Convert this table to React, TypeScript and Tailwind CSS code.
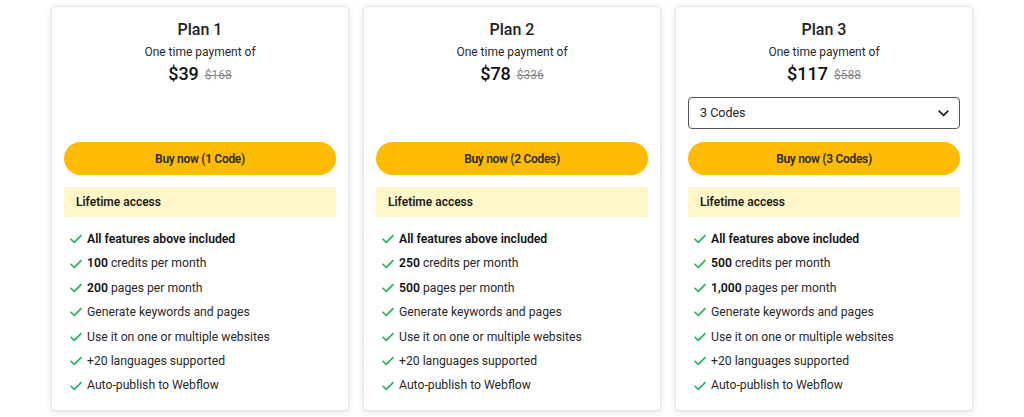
import React from "react";

type Feature = { bold?: string; text: string; allBold?: boolean };
type Plan = {
  name: string;
  price: string;
  old: string;
  button: string;
  select?: string;
  features: Feature[];
};

const common: Feature[] = [
  { text: "Generate keywords and pages" },
  { text: "Use it on one or multiple websites" },
  { text: "+20 languages supported" },
  { text: "Auto-publish to Webflow" },
];

const plans: Plan[] = [
  {
    name: "Plan 1",
    price: "$39",
    old: "$168",
    button: "Buy now (1 Code)",
    features: [
      { text: "All features above included", allBold: true },
      { bold: "100", text: " credits per month" },
      { bold: "200", text: " pages per month" },
      ...common,
    ],
  },
  {
    name: "Plan 2",
    price: "$78",
    old: "$336",
    button: "Buy now (2 Codes)",
    features: [
      { text: "All features above included", allBold: true },
      { bold: "250", text: " credits per month" },
      { bold: "500", text: " pages per month" },
      ...common,
    ],
  },
  {
    name: "Plan 3",
    price: "$117",
    old: "$588",
    button: "Buy now (3 Codes)",
    select: "3 Codes",
    features: [
      { text: "All features above included", allBold: true },
      { bold: "500", text: " credits per month" },
      { bold: "1,000", text: " pages per month" },
      ...common,
    ],
  },
];

function Check() {
  return (
    <svg width="12" height="10" viewBox="0 0 12 10" fill="none" className="shrink-0">
      <path d="M1 5.2 L4.3 8.4 L11 1.6" stroke="#22b35e" strokeWidth="1.6" strokeLinecap="round" strokeLinejoin="round" />
    </svg>
  );
}

function Card({ plan }: { plan: Plan }) {
  return (
    <div className="w-[298px] bg-white border border-[#e6e6e6] shadow-[0_1px_6px_rgba(0,0,0,0.12)] rounded-[3px] px-3 pt-[13px] pb-[12px] flex flex-col">
      <div className="text-center text-[16px] leading-[20px] font-medium text-[#222]">{plan.name}</div>
      <div className="text-center text-[12px] leading-[18px] mt-[3px] text-[#2a2a2a]">One time payment of</div>
      <div className="h-[24px] flex items-center justify-center gap-[6px] mt-[1px] overflow-hidden">
        <span className="text-[18px] leading-[24px] font-medium text-[#111]">{plan.price}</span>
        <span className="text-[12px] leading-[24px] pt-[1px] text-[#888] line-through">{plan.old}</span>
      </div>
      <div className="mt-[11px] h-[32px]">
        {plan.select && (
          <div className="h-[32px] border border-[#555] rounded-[4px] flex items-center justify-between pl-[11px] pr-[10px] text-[12.5px] text-[#222]">
            <span>{plan.select}</span>
            <svg width="11" height="7" viewBox="0 0 11 7" fill="none">
              <path d="M1.2 1.2 L5.5 5.4 L9.8 1.2" stroke="#222" strokeWidth="1.8" strokeLinecap="round" strokeLinejoin="round" />
            </svg>
          </div>
        )}
      </div>
      <button className="mt-[13px] h-[33px] rounded-full bg-[#ffbb00] text-[12px] font-semibold text-[#2a2a2a] tracking-[-0.3px]">
        {plan.button}
      </button>
      <div className="mt-[12px] h-[30px] bg-[#fff6c9] flex items-center px-3 text-[12px] font-semibold text-[#1a1a1a]">
        Lifetime access
      </div>
      <ul className="mt-[10px] flex flex-col">
        {plan.features.map((f, i) => (
          <li key={i} className="h-[24.4px] flex items-center gap-[5px] pl-[6px] text-[12.2px] text-[#2a2a2a]">
            <Check />
            {f.allBold ? (
              <span className="font-semibold text-[#111]">{f.text}</span>
            ) : (
              <span>
                {f.bold && <span className="font-semibold text-[#111]">{f.bold}</span>}
                {f.text}
              </span>
            )}
          </li>
        ))}
      </ul>
    </div>
  );
}

export default function App() {
  return (
    <div className="w-[1024px] h-[417px] bg-white flex items-start justify-center gap-[14px] pt-[6px]" style={{ fontFamily: "Roboto, 'Noto Sans', sans-serif" }}>
      {plans.map((p) => (
        <Card key={p.name} plan={p} />
      ))}
    </div>
  );
}
